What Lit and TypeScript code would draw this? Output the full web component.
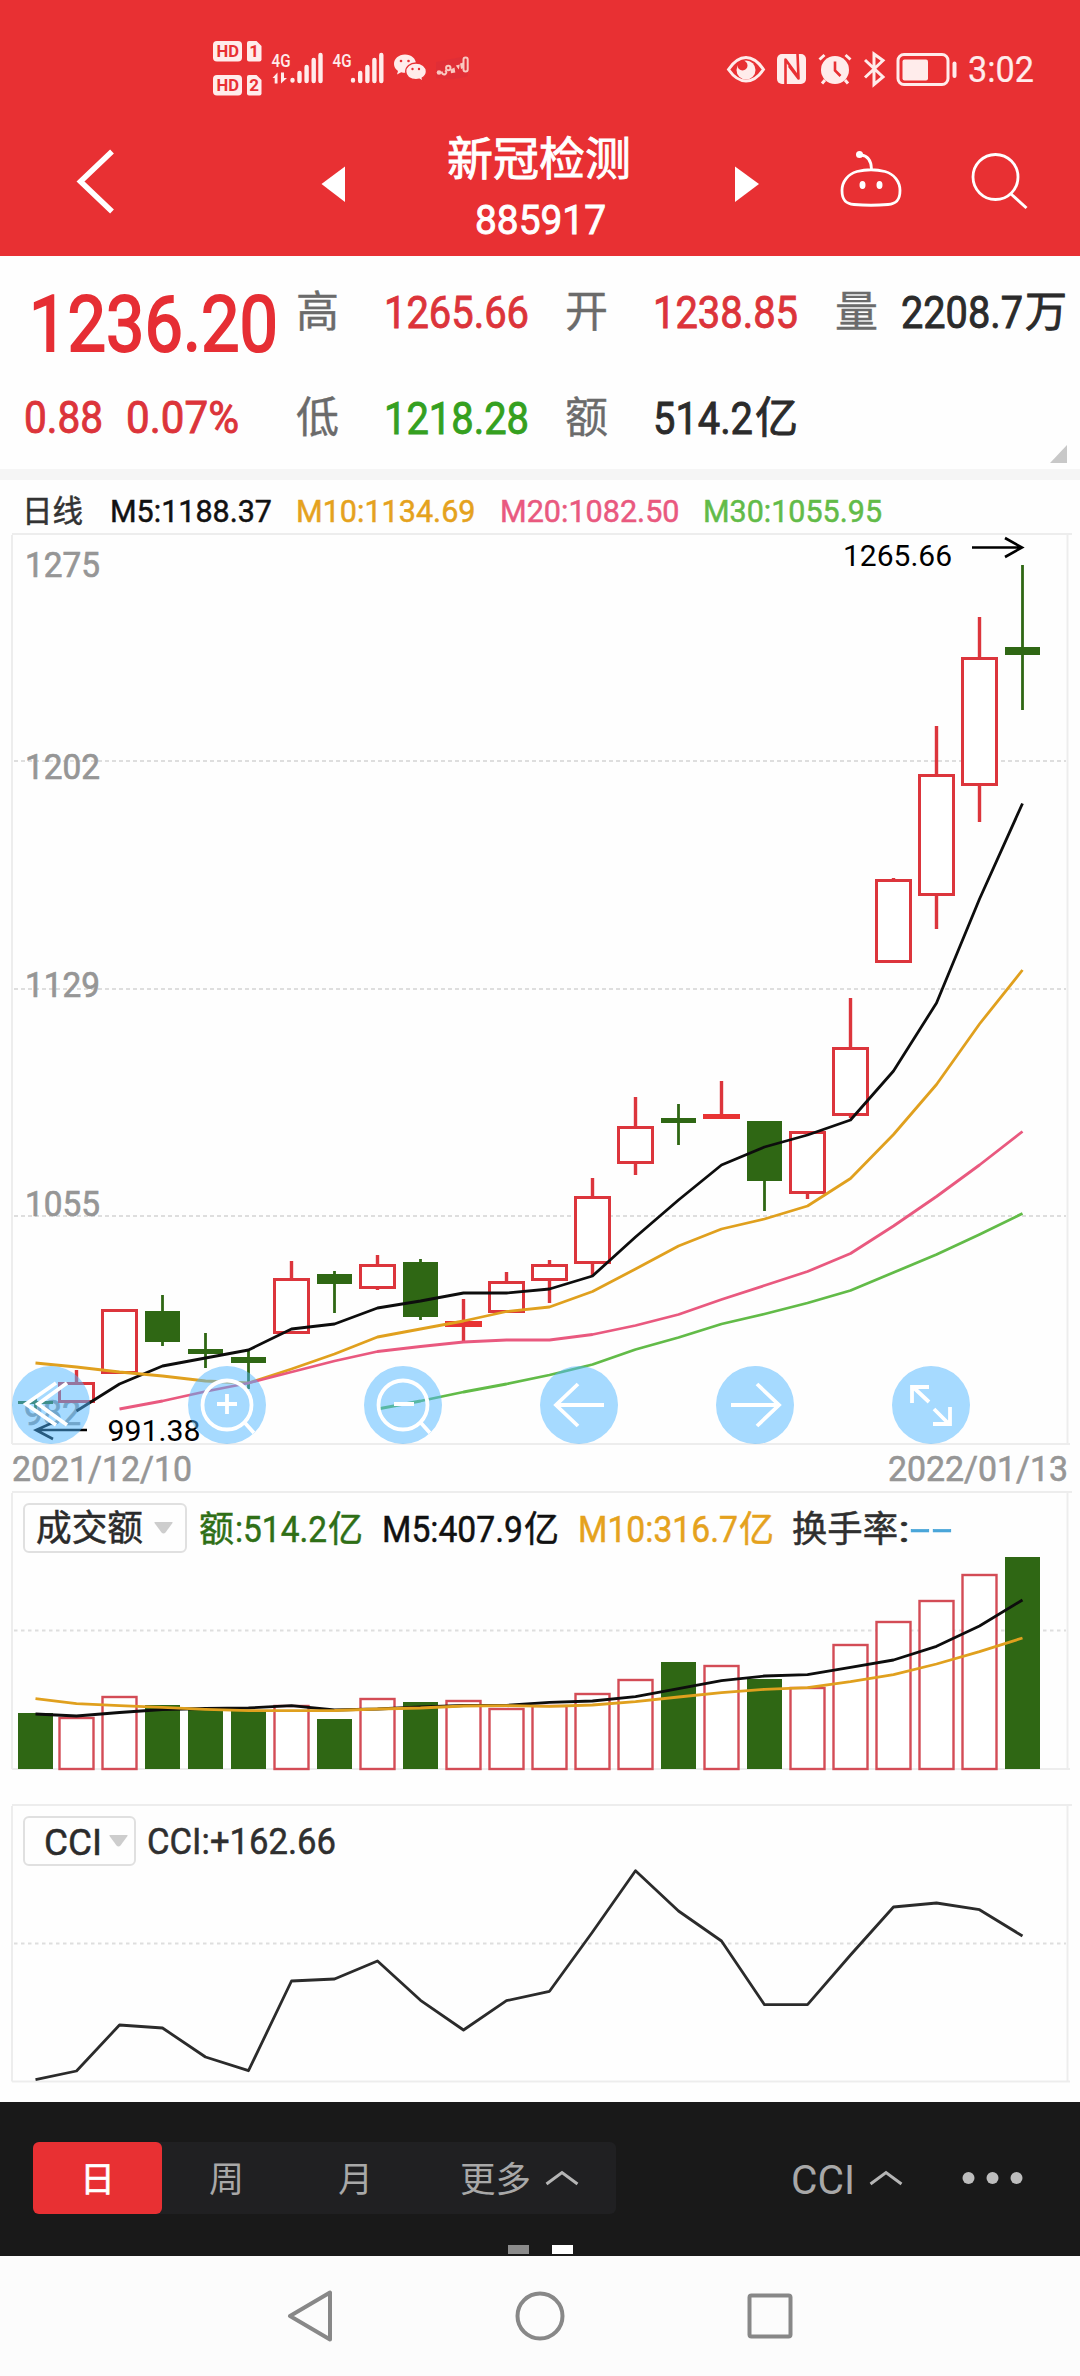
import { LitElement, html, svg, css } from "lit";
import { customElement, property } from "lit/decorators.js";

type Candle = [up: number, top: number, bottom: number, high: number, low: number];

/** Horizontal centre of the n-th trading day. */
const cx = (i: number) => (i === 0 ? 35.5 : 33.5 + 43 * i);

const candles: Candle[] = [
  [0, 1401, 1404, 1396, 1411],
  [1, 1382, 1403, 1370, 1403],
  [1, 1309, 1374, 1309, 1374],
  [0, 1311, 1342, 1295, 1346],
  [0, 1349, 1354, 1333, 1368],
  [0, 1357, 1363, 1351, 1389],
  [1, 1278, 1334, 1261, 1334],
  [0, 1274, 1284, 1271, 1313],
  [1, 1264, 1289, 1255, 1290],
  [0, 1262, 1317, 1259, 1320],
  [1, 1321, 1327, 1299, 1342],
  [1, 1281, 1313, 1272, 1313],
  [1, 1264, 1281, 1260, 1303],
  [1, 1196, 1264, 1178, 1276],
  [1, 1126, 1164, 1097, 1175],
  [0, 1118, 1123, 1104, 1145],
  [1, 1114, 1119, 1081, 1119],
  [0, 1121, 1181, 1121, 1211],
  [1, 1131, 1194, 1131, 1199],
  [1, 1047, 1116, 998, 1118],
  [1, 879, 963, 878, 963],
  [1, 774, 896, 726, 929],
  [1, 657, 786, 617, 822],
  [0, 647, 655, 565, 710],
];

const volumes = [
  1713, 1717, 1696, 1705, 1708, 1710, 1705, 1719, 1698, 1702, 1700, 1708,
  1705, 1693, 1679, 1662, 1665, 1679, 1687, 1644, 1621, 1600, 1574, 1557,
];

const m5 = [
  1411, 1384, 1366, 1358, 1350, 1329, 1324, 1308, 1301, 1293, 1293, 1289,
  1276, 1237, 1200, 1165, 1147, 1135, 1120, 1071, 1003, 899, 803.5,
];
const m10 = [
  1363, 1367, 1372, 1376, 1381, 1383, 1369, 1354, 1337, 1329, 1321, 1311.5,
  1307, 1291.5, 1269, 1246, 1229, 1219, 1206, 1178.5, 1134.5, 1084.5, 1024, 970,
];
const m20 = [
  1409, 1401, 1391.5, 1383, 1372, 1361, 1351.5, 1346.5, 1342, 1340, 1340,
  1334.5, 1325.5, 1314.5, 1299.5, 1285.5, 1271.5, 1253.5, 1226, 1196.5, 1165, 1131.5,
];
const m30 = [
  1409, 1401, 1392, 1384, 1375, 1364.5, 1349.5, 1337.5, 1324, 1314, 1303,
  1290.5, 1272.5, 1254.5, 1234.5, 1213.5,
];
const v5 = [
  1714, 1716, 1712.5, 1709.5, 1708.5, 1708, 1705.7, 1710, 1709, 1707, 1705.5, 1705.3,
  1702.3, 1701, 1696.7, 1688.7, 1680.7, 1676, 1674.7, 1667.3, 1660, 1646.3, 1626, 1600,
];
const v10 = [
  1698.7, 1703.7, 1705.7, 1707.3, 1709.3, 1710.7, 1710.7, 1710.5, 1709, 1708, 1706, 1705.7,
  1706.3, 1705, 1701.7, 1697, 1692.7, 1689.3, 1687.7, 1681.7, 1674.7, 1664, 1651.7, 1638,
];
const cci = [
  2079.7, 2071, 2025, 2028, 2057, 2070.7, 1981, 1979, 1961, 2000.3, 2030, 2000.7,
  1991.3, 1932, 1870.7, 1911, 1941, 2004.7, 2004.7, 1955, 1907, 1903, 1909.7, 1936,
];

const line = (ys: number[], cls: string, from = 0) =>
  svg`<polyline class="line ${cls}" points=${ys.map((y, i) => `${cx(i + from)},${y}`).join(" ")} />`;

const grid = (y: number) => svg`<line class="grid" x1="14" x2="1066" y1=${y} y2=${y} />`;
const frame = (top: number, bottom: number) => svg`
  <path class="frame" d="M12 ${top}H1072M12 ${bottom}H1070M12 ${top + 1}V${bottom}M1067.5 ${top + 1}V${bottom}" />`;

const tick = (s: string, x: number, y: number, w: number) =>
  svg`<text class="tick" x=${x} y=${y} textLength=${w} lengthAdjust="spacingAndGlyphs">${s}</text>`;

/** One run of text condensed or widened to a given advance width. */
@customElement("fit-text")
class FitText extends LitElement {
  @property() text = "";
  @property({ type: Number }) w = 0;
  @property({ type: Number }) size = 36;
  static styles = css`
    :host { display: block; flex: none; }
    svg { display: block; overflow: visible; }
    text {
      fill: currentColor;
      stroke: currentColor;
      stroke-width: var(--weight, 0.4px);
      font-family: Roboto, "Noto Sans CJK SC", sans-serif;
      white-space: pre;
    }
  `;
  render() {
    return html`<svg width=${this.w} height=${this.size}>
      <text x="0" y=${this.size * 0.86} font-size=${this.size} textLength=${this.w}
        lengthAdjust="spacingAndGlyphs">${this.text}</text>
    </svg>`;
  }
}

const fit = (text: string, w: number, size: number, cls = "") =>
  html`<fit-text class=${cls} .text=${text} .w=${w} .size=${size}></fit-text>`;

@customElement("status-bar")
class StatusBar extends LitElement {
  static styles = css`
    :host {
      display: flex; justify-content: space-between; box-sizing: border-box;
      height: 110px; padding: 36px 46px 0 212px; color: #ffeceb;
      font-family: Roboto, sans-serif; --weight: 0.2px;
    }
    svg { display: block; overflow: visible; }
    .right { display: flex; align-items: center; height: 65px; }
    .right svg { margin-right: 11px; }
    .right .battery { margin: 0 10px 0 0; }
    .hd { font-size: 17px; font-weight: 700; fill: #e83033; }
    .net { font-size: 19px; font-weight: 500; fill: #ffeceb; }
    .f { fill: #ffeceb; }
    .s { fill: none; stroke: #ffeceb; stroke-width: 3; }
    .cut { fill: #e83033; }
    .cs { fill: none; stroke: #e83033; stroke-width: 2.6; }
    .bars { stroke: #ffeceb; stroke-width: 4.4; stroke-linecap: round; }
  `;
  render() {
    return html`
      <svg width="260" height="62" viewBox="212 36 260 62">
        ${[[41, "1"], [75, "2"]].map(([y, n]) => svg`
          <rect class="f" x="213" y=${y} width="29" height="20.5" rx="4" />
          <text class="hd" x="216.500" y=${+y + 16.3} textLength="22.500" lengthAdjust="spacingAndGlyphs">HD</text>
          <path class="f" d="M249 ${y}h7.500l5 5v13.500q0 2-2 2h-10.500q-2 0-2-2v-16.500q0-2 2-2z" />
          <text class="hd" x="249.300" y=${+y + 16.3}>${n}</text>`)}
        <text class="net" x="271.500" y="66.500" textLength="19" lengthAdjust="spacingAndGlyphs">4G</text>
        <path class="f" d="M272.500 78l5-5.500v11h-2.800v-5.500zM281 72.500v11l6-5.500h-3v-5.500z" />
        <path class="bars" d="M292.500 80v.6M299.500 73v8M306.600 67v14M313.700 60v21M320.500 55v26" />
        <text class="net" x="332.500" y="66.500" textLength="19" lengthAdjust="spacingAndGlyphs">4G</text>
        <path class="bars" d="M353 80v.6M360.200 73v8M367.400 67v14M374.400 60v21M381.300 55v26" />
        <path class="f" d="M405 54.500c-6.500 0-11 4.300-11 9.400 0 3 1.500 5.300 4 7l-1 3.600 4.200-2.200c1.200.4 2.500.5 3.800.5 6.200 0 11-3.900 11-9s-4.800-9.300-11-9.300z" />
        <path class="f" stroke="#e83033" stroke-width="1.300" d="M416 63c-6 0-10.300 3.700-10.300 8.500s4.400 8.200 10.300 8.200c1.200 0 2.300-.2 3.400-.5l3.600 2-.8-3.200c2.600-1.600 4.200-3.700 4.200-6.500 0-4.800-4.600-8.500-10.400-8.500z" />
        <g class="cut"><circle cx="401" cy="61" r="1.300" /><circle cx="408.500" cy="61" r="1.300" />
          <circle cx="412.500" cy="69" r="1.200" /><circle cx="419" cy="69" r="1.200" /></g>
        <path fill="#d42c3b" opacity=".4" d="M436 62q16-3 30-6l2 20q-14 5-32 2z" />
        <g fill="#f9c8c0">
          <circle cx="439" cy="72.500" r="2.300" />
          <path d="M450.500 69.500l4-2 .8 5-4.300.8zM455.800 65.500l4-1-1 5zM460 63.500l3.500-1v5.500l-2.500 1z" />
        </g>
        <g fill="none" stroke="#f9c8c0" stroke-width="2">
          <path d="M441.500 71.500q1 4 4 2.500 2-2-.5-3.500" /><circle cx="448.300" cy="68" r="2.200" />
          <rect x="463.500" y="57.500" width="4.200" height="14" rx="2" />
        </g>
      </svg>
      <div class="right">
        <svg width="39" height="34" viewBox="727 51 39 34">
          <path class="s" d="M728.500 68.500q8-12 17.500-12t17.500 12q-8 11.500-17.500 11.500t-17.500-11.500z" />
          <circle class="f" cx="746" cy="69" r="9.500" /><circle class="cut" cx="742.500" cy="64.500" r="5" />
        </svg>
        <svg width="30" height="34" viewBox="777 51 30 34">
          <rect class="f" x="777" y="53" width="29" height="30" rx="5" />
          <path class="cs" stroke-linejoin="round" d="M785.500 84V58.500l12 16.500M797.500 52l1 25.500-9.500-12.500" />
        </svg>
        <svg width="34" height="34" viewBox="817 51 34 34">
          <circle class="f" cx="834" cy="69" r="14" />
          <path class="s" d="M818.500 58.500l5-4.500M849.500 58.500l-5-4.500M824 79l-3 3.500M844 79l3 3.500" />
          <path class="cs" d="M834 60.500v9l5.500 5.500" stroke-width="3" />
        </svg>
        <svg width="23" height="34" viewBox="861 51 23 34">
          <path class="s" d="M863 59l18 17-9 7.500V53l9 6.500-18 17" stroke-width="2.800" />
        </svg>
        <svg class="battery" width="61" height="34" viewBox="896 51 61 34">
          <rect class="s" x="897" y="53.500" width="50" height="30" rx="6" stroke-width="2.600" />
          <rect class="f" x="901.500" y="58.500" width="25.500" height="21" rx="2" />
          <rect class="f" x="951.500" y="60.500" width="4" height="16.500" rx="2" />
        </svg>
        ${fit("3:02", 66, 37)}
      </div>`;
  }
}

@customElement("title-bar")
class TitleBar extends LitElement {
  static styles = css`
    :host {
      display: grid; grid-template-columns: 77px 244px 126px 184px 104px 105px 131px 109px;
      height: 146px; color: #fff; align-items: start;
    }
    svg { display: block; overflow: visible; }
    .back, .robot, .search { fill: none; stroke: #fff; }
    .back { grid-column: 2; margin-top: 39px; }
    .left, .right { margin-top: 56px; fill: #fff; }
    .titles { display: flex; flex-direction: column; align-items: center; gap: 18px; padding-top: 25px; }
    .bold { --weight: 0.9px; }
    .code { --weight: 0.9px; margin-left: 3px; }
    .robot, .search { margin-top: 41px; }
    .right { grid-column: 6; }
    .solid { fill: #fff; stroke: none; }
  `;
  render() {
    return html`
      <svg class="back" width="36" height="64" viewBox="76 149 36 64">
        <path d="M111 151.500L79.500 181.500L111 211.500" stroke-width="5.500" />
      </svg>
      <svg class="left" width="24" height="36" viewBox="321 166 24 36"><path d="M345 166.500v35.500L321.500 184z" /></svg>
      <div class="titles">
        ${fit("新冠检测", 184, 46, "bold")}
        ${fit("885917", 131, 41, "code")}
      </div>
      <svg class="right" width="24" height="36" viewBox="735 166 24 36"><path d="M735 166.500v35.500L759 184z" /></svg>
      <svg class="robot" width="62" height="56" viewBox="839 157 62 56">
        <path stroke-width="2.800" d="M860 161q10 1 10.500 14M856 177.500q14-3.500 28 0c9 2.500 15 10 15 19 0 10-4 13.500-12 14q-17 1.500-34 0c-8-.5-12-4-12-14 0-9 6-16.500 15-19z" />
        <circle class="solid" cx="858.500" cy="160.500" r="3.500" />
        <ellipse class="solid" cx="861.500" cy="191" rx="3" ry="4" /><ellipse class="solid" cx="878.500" cy="191" rx="3" ry="4" />
      </svg>
      <svg class="search" width="57" height="56" viewBox="970 153 57 56">
        <circle cx="994.500" cy="179" r="22.500" stroke-width="2.800" /><path d="M1010 196l15.500 14" stroke-width="3" />
      </svg>`;
  }
}

@customElement("quote-panel")
class QuotePanel extends LitElement {
  static styles = css`
    :host {
      display: grid; grid-template-columns: 296px 1fr; box-sizing: border-box;
      height: 213px; background: #fefefe; overflow: hidden;
    }
    .main { display: flex; flex-direction: column; gap: 33px; padding: 28px 0 0 29px; color: #e62e34; }
    .price { --weight: 2px; }
    .change { display: flex; gap: 23px; margin-left: -5px; }
    .stats {
      display: grid; grid-template-columns: 88px 181px 88px 182px 66px auto;
      grid-template-rows: 106px 1fr; padding-top: 34px; justify-content: start; align-items: start;
    }
    .k { color: #6b6b6b; }
    .r { color: #dc343a; }
    .g { color: #35a01f; }
    .d { color: #2b2b2b; }
    .pair { display: flex; gap: 2px; }
    .r, .g, .d { --weight: 0.9px; }
    .last { display: flex; grid-column: 5 / 7; align-self: end; justify-self: end; }
  `;
  render() {
    return html`
      <div class="main">
        ${fit("1236.20", 249, 78, "price")}
        <div class="change">${fit("0.88", 79, 44, "r")}${fit("0.07%", 113, 44, "r")}</div>
      </div>
      <div class="stats">
        ${fit("高", 43, 43, "k")}${fit("1265.66", 145, 44, "r")}
        ${fit("开", 43, 43, "k")}${fit("1238.85", 145, 44, "r")}
        ${fit("量", 43, 43, "k")}<div class="pair">${fit("2208.7", 122, 44, "d")}${fit("万", 42, 43, "d")}</div>
        ${fit("低", 43, 43, "k")}${fit("1218.28", 145, 44, "g")}
        ${fit("额", 43, 43, "k")}<div class="pair">${fit("514.2", 100, 44, "d")}${fit("亿", 43, 43, "d")}</div>
        <svg class="last" width="18" height="24" viewBox="0 0 18 24"><path d="M18 0v18H1z" fill="#c8c8c8" /></svg>
      </div>`;
  }
}

@customElement("price-chart")
class PriceChart extends LitElement {
  static styles = css`
    :host { display: block; }
    .legend { display: flex; gap: 24px; height: 34px; padding: 15px 0 3px 22px; --weight: 0.5px; }
    .legend .d { margin-right: 3px; color: #333; }
    .b { color: #111; }
    .o { color: #e5a21d; }
    .p { color: #e9597f; }
    .g { color: #62bb48; }
    .stack { display: grid; height: 914px; }
    .stack > * { grid-area: 1 / 1; }
    .plot { display: block; width: 1080px; height: 914px; }
    .grid { stroke: #dedede; stroke-width: 1.8; stroke-dasharray: 4 3; }
    .frame { fill: none; stroke: #ededed; stroke-width: 2; }
    .line { fill: none; stroke-width: 2.8; stroke-linejoin: round; }
    .m5 { stroke: #0d0d0d; }
    .m10 { stroke: #e0a01e; }
    .m20 { stroke: #e9597f; }
    .m30 { stroke: #62bb48; }
    .up { fill: #fff; stroke: #dc353c; stroke-width: 3; }
    .upf { fill: #e83333; }
    .upw { stroke: #dc353c; stroke-width: 3.4; }
    .down { fill: #2f6714; }
    .downw { stroke: #2f6714; stroke-width: 2.8; }
    .arrow { fill: none; stroke: #000; stroke-width: 2.6; }
    text { font-family: Roboto, sans-serif; }
    .tick { font-size: 35px; fill: #969696; stroke: #969696; stroke-width: 0.7px; }
    .mark { font-size: 29.500px; fill: #000; }
    .tools { display: flex; align-items: flex-end; gap: 98px; padding: 0 0 2px 12px; z-index: 1; }
    .tool { display: block; width: 78px; height: 78px; border-radius: 50%; background: rgba(77, 181, 255, 0.5); }
    .tool path, .tool circle { fill: none; stroke: #fff; stroke-width: 3.8; }
    .dates { display: flex; justify-content: space-between; height: 31px; padding: 5px 12px 9px; color: #969696; --weight: 0.6px; }
  `;
  render() {
    const icons = [
      "M55 17L26 38L55 59M44 17L14 38L44 59",
      "M39 28v20M29 38h20M57 57l9 10",
      "M30 38h20M57 57l9 10",
      "M64 39H17M38 18L16 39L38 60",
      "M15 39H62M41 18L63 39L41 60",
      "M37 36L21 21M20 37V21H37M42 43L57 58M58 41V58H41",
    ];
    return html`
      <div class="legend">
        ${fit("日线", 61, 31, "d")}${fit("M5:1188.37", 162, 31, "b")}
        ${fit("M10:1134.69", 179.5, 31, "o")}${fit("M20:1082.50", 179.5, 31, "p")}${fit("M30:1055.95", 179, 31, "g")}
      </div>
      <div class="stack">
        <svg class="plot" viewBox="0 532 1080 914">
          ${frame(534, 1444)}${grid(761)}${grid(989)}${grid(1216)}
          ${tick("1275", 25, 576.7, 75)}${tick("1202", 25, 779, 75)}${tick("1129", 25, 996.7, 75)}
          ${tick("1055", 25, 1216, 75)}${tick("982", 24, 1425, 57)}
          ${candles.map(([up, top, bottom, high, low], i) => {
            const x = cx(i);
            const body = up
              ? bottom - top < 8
                ? svg`<rect class="upf" x=${x - 18.5} y=${top} width="37" height=${bottom - top} />`
                : svg`<rect class="up" x=${x - 17} y=${top + 1.5} width="34" height=${bottom - top - 3} />`
              : svg`<rect class="down" x=${x - 17.5} y=${top} width="35" height=${bottom - top} />`;
            return svg`<line class=${up ? "upw" : "downw"} x1=${x} x2=${x} y1=${high} y2=${low} />${body}`;
          })}
          ${line(m5, "m5", 1)}${line(m10, "m10")}${line(m20, "m20", 2)}${line(m30, "m30", 8)}
          <text class="mark" x="843" y="566" textLength="109" lengthAdjust="spacingAndGlyphs">1265.66</text>
          <path class="arrow" d="M972 547.500H1021M1005 538L1022 547.500L1005 557" />
          <text class="mark" x="107.500" y="1441" textLength="93" lengthAdjust="spacingAndGlyphs">991.38</text>
          <path class="arrow" d="M87 1430H37M52 1423L36 1430L53 1439" />
        </svg>
        <div class="tools">
          ${icons.map((d, i) => html`<svg class="tool" viewBox="0 0 78 78">
            <path d=${d} />${i === 1 || i === 2 ? svg`<circle cx="39" cy="39" r="24.500" />` : ""}
          </svg>`)}
        </div>
      </div>
      <div class="dates">${fit("2021/12/10", 180, 35)}${fit("2022/01/13", 180, 35)}</div>`;
  }
}

const panelStyles = css`
  :host { display: grid; --weight: 0.5px; }
  .plot, .head { grid-area: 1 / 1; }
  .plot { display: block; width: 1080px; }
  .head { display: flex; align-items: flex-start; z-index: 1; }
  .pick {
    display: flex; align-items: center; box-sizing: border-box; height: 50px;
    border: 2px solid #e0e0e0; border-radius: 6px; background: #fefefe; color: #2b2b2b;
  }
  .frame { fill: none; stroke: #ededed; stroke-width: 2; }
  .grid { stroke: #dedede; stroke-width: 1.8; stroke-dasharray: 3.500 3.500; }
  .line { fill: none; stroke-width: 2.8; stroke-linejoin: round; }
  .b { color: #111; }
  .d { color: #2f2f2f; }
`;
const caret = html`<svg width="19" height="12" viewBox="0 0 19 12"><path d="M1 0h17q1 0 .5 1l-7 9.500q-2 2-4 0l-7-9.500q-.5-1 .5-1z" fill="#cdcdcd" /></svg>`;

@customElement("volume-chart")
class VolumeChart extends LitElement {
  static styles = [panelStyles, css`
    .plot { height: 280px; }
    .head { padding: 12px 0 0 23px; }
    .pick { width: 164px; padding-left: 11px; gap: 11px; }
    .vals { display: flex; padding-top: 8px; }
    .g { color: #2f6f16; margin-left: 12px; }
    .g + .g { margin-left: 1px; }
    .o + .o { margin-left: 1px; }
    .b { margin-left: 19px; }
    .b + .b { margin-left: 1px; }
    .b + .o { margin-left: 19px; }
    .o { color: #e5a21d; }
    .d { margin-left: 18px; }
    .d + .d { margin-left: 0; }
    .c { color: #4aa6d9; margin-left: 0; }
    .c + .c { margin-left: 2px; }
    .up { fill: #fff; stroke: #d34c56; stroke-width: 2.4; }
    .down { fill: #2f6714; }
    .m5 { stroke: #0d0d0d; }
    .m10 { stroke: #e0a01e; }
  `];
  render() {
    return html`
      <svg class="plot" viewBox="0 1491 1080 280">
        ${frame(1492, 1769)}${grid(1630.5)}
        ${volumes.map((y, i) => candles[i][0]
          ? svg`<rect class="up" x=${cx(i) - 17} y=${y + 1} width="34" height=${1768 - y} />`
          : svg`<rect class="down" x=${cx(i) - 17.5} y=${y} width="35" height=${1769 - y} />`)}
        ${line(v5, "m5")}${line(v10, "m10")}
      </svg>
      <div class="head">
        <div class="pick">${fit("成交额", 107, 36)}${caret}</div>
        <div class="vals">
          ${fit("额", 35, 36, "g")}${fit(":514.2", 92, 36, "g")}${fit("亿", 35, 36, "g")}
          ${fit("M5:407.9", 141, 36, "b")}${fit("亿", 35, 36, "b")}
          ${fit("M10:316.7", 160, 36, "o")}${fit("亿", 35, 36, "o")}
          ${fit("换手率", 106, 36, "d")}${fit(":", 12, 36, "d")}
          ${fit("-", 20, 36, "c")}${fit("-", 20, 36, "c")}
        </div>
      </div>`;
  }
}

@customElement("cci-chart")
class CciChart extends LitElement {
  static styles = [panelStyles, css`
    .plot { height: 300px; }
    .head { padding: 12px 0 0 23px; }
    .pick { width: 113px; padding-left: 19px; gap: 7px; }
    .d { margin: 7px 0 0 11px; }
    .cci { stroke: #2b2b2b; }
  `];
  render() {
    return html`
      <svg class="plot" viewBox="0 1804 1080 300">
        ${frame(1805, 2081.5)}${grid(1943.5)}${line(cci, "cci")}
      </svg>
      <div class="head">
        <div class="pick">${fit("CCI", 58, 37)}${caret}</div>
        ${fit("CCI:+162.66", 189, 36, "d")}
      </div>`;
  }
}

@customElement("period-bar")
class PeriodBar extends LitElement {
  static styles = css`
    :host {
      display: flex; flex-direction: column; justify-content: space-between; box-sizing: border-box;
      height: 154px; padding: 40px 0 2px; background: #191919; color: #a8a8a8; --weight: 0px;
    }
    .row { display: flex; align-items: center; justify-content: space-between; padding: 0 57px 0 33px; }
    .tabs { display: flex; align-items: center; width: 583px; height: 72px; border-radius: 6px; background: #202022; }
    .tab { display: flex; align-items: center; justify-content: center; width: 129px; height: 72px; }
    .row fit-text { margin-top: 3px; }
    .on { border-radius: 6px; background: #e83033; color: #fff; --weight: 0.6px; }
    .more, .ind { display: flex; align-items: center; gap: 14px; }
    .more { margin-left: 40px; }
    .side { display: flex; align-items: center; gap: 59px; }
    svg { display: block; }
    .up { fill: none; stroke: #b5b5b5; stroke-width: 3; }
    .pages { display: flex; justify-content: center; gap: 23px; }
    .page { width: 21px; height: 9px; background: #8b8b8b; }
    .cur { background: #fff; }
  `;
  render() {
    const up = html`<svg class="up" width="34" height="16" viewBox="0 0 34 16"><path d="M1.500 14L17 2.500L32.500 14" /></svg>`;
    return html`
      <div class="row">
        <div class="tabs">
          <div class="tab on">${fit("日", 35, 35)}</div>
          <div class="tab">${fit("周", 35, 35)}</div>
          <div class="tab">${fit("月", 35, 35)}</div>
          <div class="more">${fit("更多", 71, 35)}${up}</div>
        </div>
        <div class="side">
          <div class="ind">${fit("CCI", 64, 40)}${up}</div>
          <svg width="61" height="14" viewBox="0 0 61 14" fill="#bdbdbd">
            <circle cx="6.500" cy="7" r="6" /><circle cx="30.500" cy="7" r="6" /><circle cx="54.500" cy="7" r="6" />
          </svg>
        </div>
      </div>
      <div class="pages"><div class="page"></div><div class="page cur"></div></div>`;
  }
}

@customElement("app-root")
class AppRoot extends LitElement {
  static styles = css`
    :host { display: flex; flex-direction: column; width: 1080px; height: 2376px; background: #fefefe; overflow: hidden; }
    .top { height: 256px; background: #e83033; }
    .band { height: 11px; background: #f5f5f5; }
    .space { height: 33px; }
    period-bar { margin-top: -2px; }
    .nav {
      display: flex; align-items: center; justify-content: center; gap: 182px;
      height: 120px; background: #fcfcfc;
    }
    .nav svg { fill: none; stroke: #888; stroke-width: 4; stroke-linejoin: round; }
  `;
  render() {
    return html`
      <div class="top"><status-bar></status-bar><title-bar></title-bar></div>
      <quote-panel></quote-panel>
      <div class="band"></div>
      <price-chart></price-chart>
      <volume-chart></volume-chart>
      <div class="space"></div>
      <cci-chart></cci-chart>
      <period-bar></period-bar>
      <div class="nav">
        <svg width="46" height="52" viewBox="0 0 46 52"><path d="M43 2.500V49.500L3 26z" /></svg>
        <svg width="50" height="50" viewBox="0 0 50 50"><circle cx="25" cy="25" r="22.500" /></svg>
        <svg width="46" height="48" viewBox="0 0 46 48"><rect x="2.500" y="3.500" width="41" height="41" rx="2" /></svg>
      </div>`;
  }
}
